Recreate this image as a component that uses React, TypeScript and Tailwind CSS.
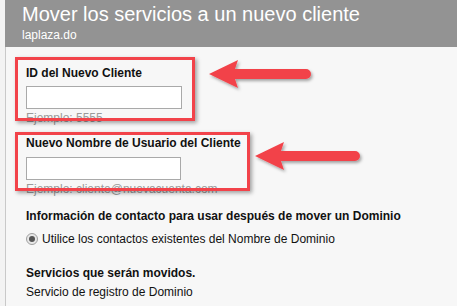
import React from "react";

function Arrow({ tipX, tipY, len }: { tipX: number; tipY: number; len: number }) {
  // arrowhead pointing left, shaft to the right with rounded end
  const x = tipX;
  const y = tipY;
  const d = `M${x},${y} L${x + 29},${y - 14} L${x + 26},${y - 5} L${x + len},${y - 5} A5,5 0 0 1 ${x + len},${y + 5} L${x + 26},${y + 5} L${x + 29},${y + 14} Z`;
  return <path d={d} fill="#f2434a" />;
}

export default function App() {
  return (
    <div className="relative w-[457px] h-[306px] overflow-hidden flex bg-[#f7f7f7] font-['Liberation_Sans',Arial,sans-serif]">
      <div className="w-[5px] shrink-0 bg-[#f3f3f3]" />
      <div className="flex-1 flex flex-col">
        {/* Header */}
        <div className="h-[47px] bg-[#939393] pl-[17px] pt-[3px] text-white">
          <div className="text-[20px] leading-[23px]">Mover los servicios a un nuevo cliente</div>
          <div className="text-[12px] leading-[14px] mt-[2px]">laplaza.do</div>
        </div>

        {/* Body */}
        <div className="flex-1 border-l border-[#c9c9c9] bg-[#f7f7f7] pl-[20px] pt-[19px] text-[12px] text-[#111]">
          <div className="font-bold leading-[14px]">ID del Nuevo Cliente</div>
          <div className="mt-[6px] w-[156px] h-[23px] bg-white border border-[#a9a9a9]" />
          <div className="mt-[2px] leading-[14px] text-[#9a9a9a]">Ejemplo: 5555</div>

          <div className="mt-[11px] font-bold leading-[14px]">Nuevo Nombre de Usuario del Cliente</div>
          <div className="mt-[7px] w-[155px] h-[23px] bg-white border border-[#a9a9a9]" />
          <div className="mt-[2px] leading-[14px] text-[#9a9a9a]">Ejemplo: cliente@nuevacuenta.com</div>

          <div className="mt-[13px] font-bold leading-[14px]">Información de contacto para usar después de mover un Dominio</div>
          <div className="mt-[9px] flex items-center gap-[4px] leading-[14px]">
            <span className="w-[12px] h-[12px] rounded-full border border-[#a0a0a0] bg-[#e8e8e8] flex items-center justify-center">
              <span className="w-[6px] h-[6px] rounded-full bg-[#555]" />
            </span>
            <span>Utilice los contactos existentes del Nombre de Dominio</span>
          </div>

          <div className="mt-[20px] font-bold leading-[14px]">Servicios que serán movidos.</div>
          <div className="mt-[5px] leading-[14px]">Servicio de registro de Dominio</div>
        </div>
      </div>

      {/* Annotation boxes */}
      <div className="absolute left-[15px] top-[57px] w-[180px] h-[64px] border-[3px] border-[#f2434a] shadow-[2px_2px_4px_rgba(0,0,0,0.35)]" />
      <div className="absolute left-[15px] top-[132px] w-[235px] h-[59px] border-[3px] border-[#f2434a] shadow-[2px_2px_4px_rgba(0,0,0,0.35)]" />

      {/* Annotation arrows */}
      <svg className="absolute inset-0" width="457" height="306" viewBox="0 0 457 306">
        <defs>
          <filter id="sh" x="-20%" y="-50%" width="140%" height="200%">
            <feDropShadow dx="1.5" dy="2" stdDeviation="1.5" floodColor="#000" floodOpacity="0.35" />
          </filter>
        </defs>
        <g filter="url(#sh)">
          <Arrow tipX={209} tipY={74} len={97} />
          <Arrow tipX={255} tipY={156} len={100} />
        </g>
      </svg>
    </div>
  );
}
